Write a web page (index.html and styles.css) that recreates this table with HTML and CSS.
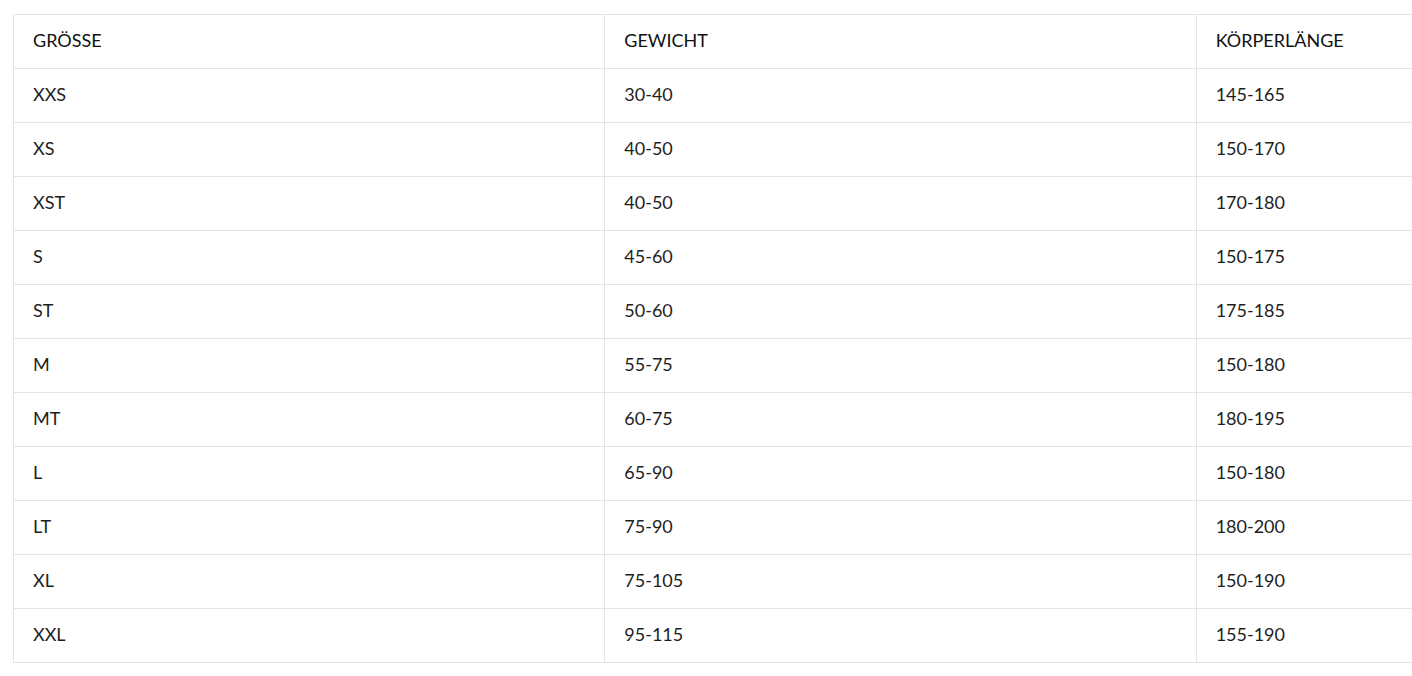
FILE: index.html
```html
<!DOCTYPE html>
<html lang="de">
<head>
<meta charset="utf-8">
<title>Größentabelle</title>
<link rel="stylesheet" href="styles.css">
</head>
<body>
<div class="wrap">
<table class="size-table">
  <thead>
    <tr><th>GRÖSSE</th><th>GEWICHT</th><th>KÖRPERLÄNGE</th></tr>
  </thead>
  <tbody>
    <tr><td>XXS</td><td>30-40</td><td>145-165</td></tr>
    <tr><td>XS</td><td>40-50</td><td>150-170</td></tr>
    <tr><td>XST</td><td>40-50</td><td>170-180</td></tr>
    <tr><td>S</td><td>45-60</td><td>150-175</td></tr>
    <tr><td>ST</td><td>50-60</td><td>175-185</td></tr>
    <tr><td>M</td><td>55-75</td><td>150-180</td></tr>
    <tr><td>MT</td><td>60-75</td><td>180-195</td></tr>
    <tr><td>L</td><td>65-90</td><td>150-180</td></tr>
    <tr><td>LT</td><td>75-90</td><td>180-200</td></tr>
    <tr><td>XL</td><td>75-105</td><td>150-190</td></tr>
    <tr><td>XXL</td><td>95-115</td><td>155-190</td></tr>
  </tbody>
</table>
</div>
</body>
</html>
```
FILE: styles.css
```css
html, body {
  margin: 0;
  padding: 0;
  background: #fff;
  overflow: hidden;
}
.wrap {
  padding: 14px 0 0 13px;
  overflow: hidden;
  width: 1399px;
}
.size-table {
  border-collapse: collapse;
  table-layout: fixed;
  width: 1775px;
  font-family: Lato, "Liberation Sans", sans-serif;
  font-size: 18px;
  line-height: 22px;
  color: #1e1e1e;
}
.size-table th,
.size-table td {
  border: 1px solid #e4e4e4;
  height: 54px;
  padding: 0 0 4px 19px;
  text-align: left;
  vertical-align: middle;
  font-weight: 400;
  box-sizing: border-box;
}
.size-table th {
  color: #111;
}
```
